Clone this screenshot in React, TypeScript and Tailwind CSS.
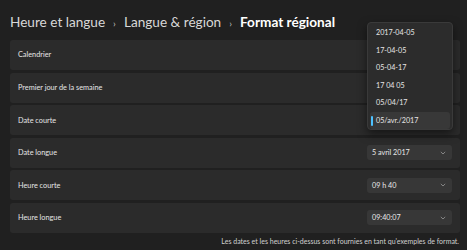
import React from "react";

const font = { fontFamily: 'Lato, "Noto Sans", sans-serif' };

function Chevron() {
  return (
    <svg width="6" height="4" viewBox="0 0 6 4" className="shrink-0">
      <path d="M0.8 0.9 L3 3 L5.2 0.9" fill="none" stroke="#9a9a9a" strokeWidth="0.8" />
    </svg>
  );
}

function Combo({ value }: { value: string }) {
  return (
    <div className="flex items-center justify-between w-[85px] h-[15px] rounded-[3px] bg-[#373737] pl-[5px] pr-[6px]">
      <span className="text-[7.2px] text-[#e8e8e8] leading-none">{value}</span>
      <Chevron />
    </div>
  );
}

const rows: { label: string; value?: string }[] = [
  { label: "Calendrier" },
  { label: "Premier jour de la semaine" },
  { label: "Date courte" },
  { label: "Date longue", value: "5 avril 2017" },
  { label: "Heure courte", value: "09 h 40" },
  { label: "Heure longue", value: "09:40:07" },
];

const options = ["2017-04-05", "17-04-05", "05-04-17", "17 04 05", "05/04/17", "05/avr./2017"];

export default function App() {
  return (
    <div className="relative w-[467px] h-[250px] bg-[#202020] overflow-hidden text-[#e6e6e6]" style={font}>
      <div className="flex items-center h-[40px] pl-[10px] pt-[6px] text-[13.6px] leading-none">
        <span className="text-[#d8d8d8]">Heure et langue</span>
        <span className="mx-[8px] text-[10px] text-[#bdbdbd]">›</span>
        <span className="text-[#d8d8d8]">Langue &amp; région</span>
        <span className="mx-[8px] text-[10px] text-[#bdbdbd]">›</span>
        <span className="font-bold text-white">Format régional</span>
      </div>
      <div className="flex flex-col gap-[2.6px] pl-[10px] pr-[7px]">
        {rows.map((r) => (
          <div
            key={r.label}
            className="flex items-center justify-between h-[30px] rounded-[3px] bg-[#2b2b2b] pl-[8px] pr-[8px]"
          >
            <span className="text-[7.3px] leading-none text-[#e6e6e6]">{r.label}</span>
            {r.value && <Combo value={r.value} />}
          </div>
        ))}
      </div>
      <div className="flex justify-end pr-[8px] pt-[5px]">
        <span className="text-[7px] leading-none text-[#d0d0d0]">
          Les dates et les heures ci-dessus sont fournies en tant qu'exemples de format.
        </span>
      </div>

      <div className="absolute left-[367px] top-[22px] w-[86px] h-[108px] rounded-[4px] bg-[#2c2c2c] border border-[#3a3a3a] shadow-[0_4px_10px_rgba(0,0,0,0.5)] flex flex-col pt-[1px] px-[2px]">
        {options.map((o, i) => {
          const sel = i === options.length - 1;
          return (
            <div
              key={o}
              className={`relative flex items-center h-[17.7px] pl-[6px] rounded-[3px] ${sel ? "bg-[#383838]" : ""}`}
            >
              {sel && <div className="absolute left-[1px] top-[4px] w-[1.5px] h-[10px] rounded-full bg-[#4cc2ff]" />}
              <span className="text-[7.2px] leading-none text-[#e6e6e6]">{o}</span>
            </div>
          );
        })}
      </div>
    </div>
  );
}
